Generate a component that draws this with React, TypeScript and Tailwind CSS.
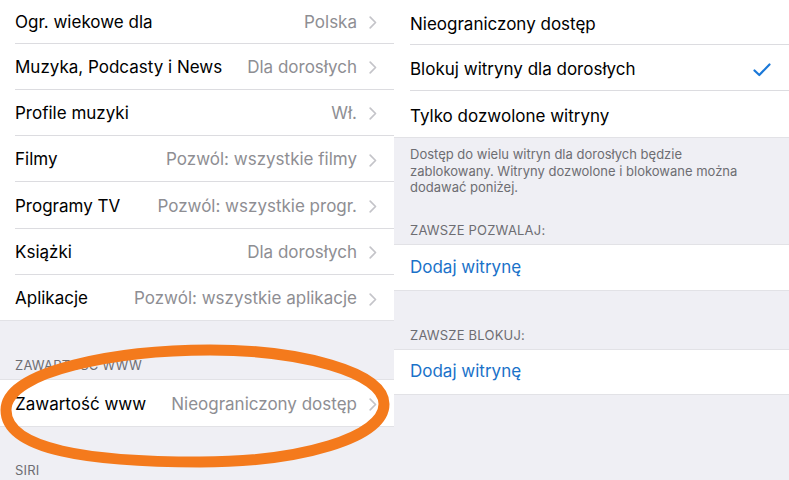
import React from "react";

const Chevron = () => (
  <svg width="8" height="13" viewBox="0 0 8 13" className="ml-[12px] shrink-0">
    <path d="M1.2 1.2 L6.5 6.5 L1.2 11.8" fill="none" stroke="#c4c4c9" strokeWidth="1.7" strokeLinecap="round" strokeLinejoin="round" />
  </svg>
);

type RowProps = { label: string; value: string; h: string; last?: boolean };

const LeftRow = ({ label, value, h, last }: RowProps) => (
  <div className={`bg-white pl-[15px] ${h}`}>
    <div className={`flex h-full items-center pr-[17px] pt-[3px] ${last ? "" : "border-b border-[#dcdce0]"}`}>
      <span className="text-[17px] text-black whitespace-nowrap">{label}</span>
      <span className="ml-auto text-[17px] text-[#8e8e93] whitespace-nowrap">{value}</span>
      <Chevron />
    </div>
  </div>
);

const Header = ({ text, cls }: { text: string; cls: string }) => (
  <div className={`flex items-end pl-[15px] text-[13px] tracking-[0.2px] text-[#6d6d72] ${cls}`}>{text}</div>
);

export default function App() {
  return (
    <div
      className="relative flex h-[480px] w-[789px] overflow-hidden bg-[#efeff4]"
      style={{ fontFamily: "Inter, 'Noto Sans', sans-serif" }}
    >
      {/* Left panel */}
      <div className="flex w-[394px] shrink-0 flex-col">
        <div className="flex flex-col border-b border-[#e2e2e6]">
          <LeftRow label="Ogr. wiekowe dla" value="Polska" h="h-[43.5px]" />
          <LeftRow label="Muzyka, Podcasty i News" value="Dla dorosłych" h="h-[46.3px]" />
          <LeftRow label="Profile muzyki" value="Wł." h="h-[46.3px]" />
          <LeftRow label="Filmy" value="Pozwól: wszystkie filmy" h="h-[46.3px]" />
          <LeftRow label="Programy TV" value="Pozwól: wszystkie progr." h="h-[46.3px]" />
          <LeftRow label="Książki" value="Dla dorosłych" h="h-[46.3px]" />
          <LeftRow label="Aplikacje" value="Pozwól: wszystkie aplikacje" h="h-[45.5px]" last />
        </div>
        <Header text="ZAWARTOŚĆ WWW" cls="h-[58px] pb-[4px]" />
        <div className="border-y border-[#e2e2e6]">
          <LeftRow label="Zawartość www" value="Nieograniczony dostęp" h="h-[46px]" last />
        </div>
        <Header text="SIRI" cls="h-[53px] pb-0" />
      </div>

      {/* Right panel */}
      <div className="flex w-[395px] shrink-0 flex-col">
        <div className="flex flex-col border-b border-[#e2e2e6]">
          <div className="h-[45px] bg-white pl-[16px]">
            <div className="flex h-full items-center border-b border-[#dcdce0] pr-[17px] pt-[5px] text-[17px] text-black">Nieograniczony dostęp</div>
          </div>
          <div className="h-[46.3px] bg-white pl-[16px]">
            <div className="flex h-full items-center border-b border-[#dcdce0] pr-[18px] pt-[5px] text-[17px] text-black">
              <span>Blokuj witryny dla dorosłych</span>
              <svg width="18" height="14" viewBox="0 0 18 14" className="ml-auto">
                <path d="M1.5 7.5 L6.3 12 L16.5 1.5" fill="none" stroke="#1a78d8" strokeWidth="2.2" strokeLinecap="round" strokeLinejoin="round" />
              </svg>
            </div>
          </div>
          <div className="flex h-[46px] items-center bg-white pl-[16px] pt-[5px] text-[17px] text-black">Tylko dozwolone witryny</div>
        </div>
        <div className="pl-[16px] pr-[20px] pt-[8px] text-[13px] leading-[16.6px] text-[#6d6d72]">
          Dostęp do wielu witryn dla dorosłych będzie zablokowany. Witryny dozwolone i blokowane można dodawać poniżej.
        </div>
        <div className="flex h-[48px] items-end pb-[4px] pl-[16px] text-[13px] tracking-[0.2px] text-[#6d6d72]">ZAWSZE POZWALAJ:</div>
        <div className="flex h-[47px] items-center border-y border-[#e2e2e6] bg-white pl-[16px] text-[17px] text-[#1a72c9]">Dodaj witrynę</div>
        <div className="flex h-[58px] items-end pb-[4px] pl-[16px] text-[13px] tracking-[0.2px] text-[#6d6d72]">ZAWSZE BLOKUJ:</div>
        <div className="flex h-[46px] items-center border-y border-[#e2e2e6] bg-white pl-[16px] text-[17px] text-[#1a72c9]">Dodaj witrynę</div>
      </div>

      {/* Orange hand-drawn ellipse overlay */}
      <svg className="pointer-events-none absolute left-0 top-0" width="789" height="480" viewBox="0 0 789 480">
        <path
          d="M 6 410 C 6 370, 120 350, 210 350 C 300 350, 384 372, 384 404 C 384 438, 300 462, 200 462 C 90 462, 6 450, 6 410 Z"
          fill="none"
          stroke="#f47a1c"
          strokeWidth="11"
        />
      </svg>
    </div>
  );
}
